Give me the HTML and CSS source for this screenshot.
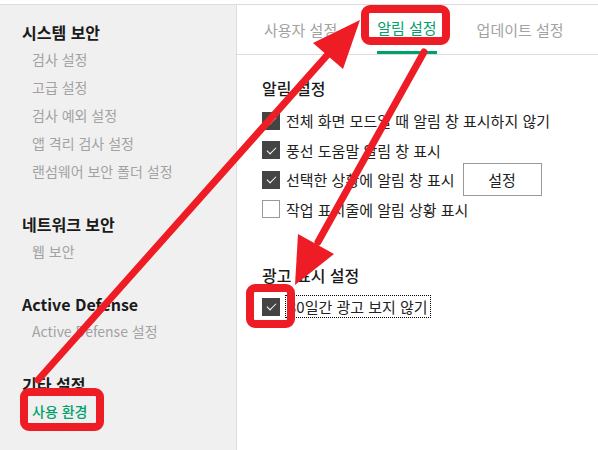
FILE: index.html
```html
<!DOCTYPE html>
<html lang="ko">
<head>
    <meta charset="UTF-8">
    <meta name="viewport" content="width=device-width, initial-scale=1.0">
    <title>설정</title>
    <link rel="stylesheet" href="styles.css">
</head>
<body>
    <div class="screen">
        <aside class="sidebar">
            <div class="group">
                <div class="group-title">시스템 보안</div>
                <div class="item">검사 설정</div>
                <div class="item">고급 설정</div>
                <div class="item">검사 예외 설정</div>
                <div class="item">앱 격리 검사 설정</div>
                <div class="item">랜섬웨어 보안 폴더 설정</div>
            </div>
            <div class="group">
                <div class="group-title">네트워크 보안</div>
                <div class="item">웹 보안</div>
            </div>
            <div class="group">
                <div class="group-title">Active Defense</div>
                <div class="item">Active Defense 설정</div>
            </div>
            <div class="group">
                <div class="group-title">기타 설정</div>
                <div class="item active">사용 환경</div>
            </div>
        </aside>

        <main class="content">
            <nav class="tabs">
                <span class="tab">사용자 설정</span>
                <span class="tab active">알림 설정</span>
                <span class="tab">업데이트 설정</span>
            </nav>

            <section class="section">
                <h2 class="section-title">알림 설정</h2>
                <label class="row"><span class="box checked"></span>전체 화면 모드일 때 알림 창 표시하지 않기</label>
                <label class="row"><span class="box checked"></span>풍선 도움말 알림 창 표시</label>
                <label class="row"><span class="box checked"></span>선택한 상황에 알림 창 표시<button class="btn">설정</button></label>
                <label class="row"><span class="box"></span>작업 표시줄에 알림 상황 표시</label>
            </section>

            <section class="section ads">
                <h2 class="section-title">광고 표시 설정</h2>
                <label class="row"><span class="box checked"></span><span class="focused">30일간 광고 보지 않기</span></label>
            </section>
        </main>

        <!-- annotation overlay -->
        <svg class="marks" width="598" height="450" viewBox="0 0 598 450">
            <g fill="none" stroke="#ee1d25" stroke-width="8">
                <rect x="365" y="9" width="81" height="32" rx="5"/>
                <rect x="250" y="288" width="41" height="36" rx="5"/>
                <rect x="24" y="392" width="76" height="35" rx="5"/>
            </g>
            <g stroke="#ee1d25" stroke-width="7" stroke-linecap="round">
                <line x1="38" y1="380" x2="330" y2="52"/>
                <line x1="424" y1="52" x2="318" y2="242"/>
            </g>
            <g fill="#ee1d25">
                <polygon points="360,20 343,69 313,43"/>
                <polygon points="295,285 298,234 334,254"/>
            </g>
        </svg>
    </div>
</body>
</html>
```

FILE: styles.css
```css
* {
    box-sizing: border-box;
}
body {
    margin: 0;
    background: #fff;
    font-family: "Noto Sans CJK KR", "Noto Sans", sans-serif;
}
.screen {
    position: relative;
    display: flex;
    width: 598px;
    height: 450px;
    padding-top: 4px;
    overflow: hidden;
}
.screen > aside,
.screen > main {
    border-top: 1px solid #dcdcdc;
}
.sidebar {
    width: 237px;
    flex-shrink: 0;
    background: #f0f0f0;
    border-right: 1px solid #dcdcdc;
    padding: 14px 0 0 22px;
}
.group + .group {
    margin-top: 26px;
}
.group-title {
    font-size: 16px;
    font-weight: 700;
    line-height: 26px;
    color: #1a1a1a;
}
.item {
    font-size: 14px;
    line-height: 28px;
    color: #a2a2a2;
    padding-left: 10px;
}
.item.active {
    color: #00a06a;
    font-weight: 500;
}
.content {
    flex: 1;
}
.tabs {
    display: flex;
    gap: 40px;
    height: 50px;
    padding-left: 27px;
    border-bottom: 1px solid #dcdcdc;
}
.tab {
    height: 49px;
    font-size: 15px;
    line-height: 49px;
    color: #a2a2a2;
    border-bottom: 3px solid transparent;
}
.tab.active {
    color: #00a06a;
    border-bottom-color: #00a06a;
    line-height: 46px;
}
.section {
    padding-left: 25px;
}
.section:first-of-type {
    padding-top: 21px;
}
.section-title {
    margin: 0 0 6px;
    font-size: 16px;
    font-weight: 500;
    line-height: 24px;
    color: #1a1a1a;
}
.ads {
    margin-top: 39px;
}
.ads .section-title {
    margin-bottom: 5px;
}
.row {
    display: flex;
    align-items: center;
    height: 29.5px;
    font-size: 15px;
    color: #222;
}
.box {
    display: flex;
    align-items: center;
    justify-content: center;
    width: 18px;
    height: 18px;
    margin-right: 6px;
    border: 1px solid #999;
    background: #fff;
    flex-shrink: 0;
}
.box.checked {
    background: #444;
    border-color: #444;
}
.box.checked::after {
    content: "";
    width: 8px;
    height: 4px;
    border-left: 1.5px solid #fff;
    border-bottom: 1.5px solid #fff;
    transform: translateY(-1px) rotate(-45deg);
}
.btn {
    margin-left: 8px;
    width: 79px;
    height: 33px;
    background: #fff;
    border: 1px solid #999;
    font-family: inherit;
    font-size: 15px;
    color: #222;
}
.focused {
    outline: 1px dotted #000;
    padding: 0 2px;
}
.marks {
    position: absolute;
    top: 0;
    left: 0;
    pointer-events: none;
}
```
